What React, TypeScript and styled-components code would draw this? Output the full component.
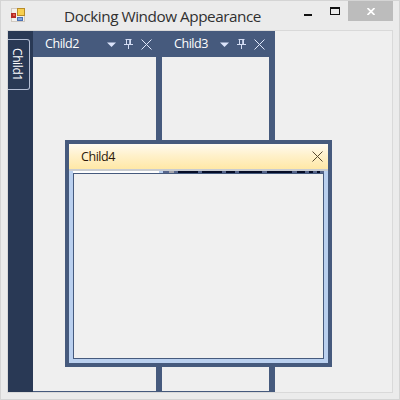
import React from "react";
import styled, { createGlobalStyle } from "styled-components";

const steel = "#465a7d";
const navy = "#293955";

const GlobalStyle = createGlobalStyle`
  * { box-sizing: border-box; }
  body { margin: 0; overflow: hidden; }
`;

const Frame = styled.div`
  position: relative;
  width: 400px;
  height: 400px;
  padding: 1px 6px 6px;
  display: flex;
  flex-direction: column;
  background: #ebebeb;
  border: 1px solid #d4d4d4;
  font-family: "Open Sans", "Noto Sans", sans-serif;
`;

const TitleBar = styled.header`
  display: flex;
  align-items: flex-start;
  height: 28px;
  padding-left: 4px;
`;

const AppIcon = styled.svg`
  flex: none;
  margin-top: 6px;
`;

const WindowTitle = styled.h1`
  flex: none;
  width: 220px;
  margin: 4px 0 0 39px;
  font-size: 15.3px;
  line-height: 21px;
  font-weight: 400;
  letter-spacing: -0.46px;
  color: #303030;
  white-space: nowrap;
`;

const Caption = styled.div`
  display: flex;
  margin-left: auto;
`;

const CaptionButton = styled.button<{ $close?: boolean }>`
  width: ${(p) => (p.$close ? 45 : 27)}px;
  height: 20px;
  margin-top: -1px;
  padding: 0;
  border: 0;
  display: flex;
  align-items: center;
  justify-content: center;
  background: ${(p) => (p.$close ? "#bcbcbc" : "transparent")};
`;

const Client = styled.main`
  flex: 1;
  display: flex;
  background: #efefef;
  border: 1px solid #d9d9d9;
`;

const AutoHideStrip = styled.aside`
  width: 25px;
  background: ${navy};
  padding-top: 8px;
`;

const AutoHideTab = styled.div`
  width: 22px;
  height: 51px;
  border: 1px solid #b5bfd5;
  border-left: 0;
  border-radius: 0 3px 3px 0;
  display: flex;
  align-items: center;
  justify-content: center;
  padding-right: 4px;
  writing-mode: vertical-rl;
  color: #fff;
  font-size: 12px;
  line-height: 16px;
  letter-spacing: -0.4px;
`;

const DockPanel = styled.section<{ $width: number; $edge: number }>`
  width: ${(p) => p.$width}px;
  display: flex;
  flex-direction: column;
  border-right: ${(p) => p.$edge}px solid ${steel};
  border-bottom: 1px solid ${steel};
`;

const DockHeader = styled.div<{ $edge: number }>`
  height: 26px;
  margin-right: -${(p) => p.$edge}px;
  padding: 0 10px 0 12px;
  display: flex;
  align-items: center;
  background: ${steel};
  color: #fff;
`;

const PanelTitle = styled.span`
  font-size: 12.5px;
  line-height: 16px;
  letter-spacing: -0.45px;
`;

const Tools = styled.div`
  display: flex;
  align-items: center;
  margin-left: auto;
`;

const FloatingWindow = styled.section`
  position: absolute;
  left: 64px;
  top: 139px;
  width: 267px;
  height: 227px;
  border: 4px solid ${steel};
  background: #bad0ef;
  display: flex;
  flex-direction: column;
`;

const FloatingHeader = styled.div`
  height: 27px;
  padding: 0 5px 0 12px;
  display: flex;
  align-items: center;
  justify-content: space-between;
  background: linear-gradient(#fffaf0, #fff1cb 45%, #ffe8a6);
  border-bottom: 2px solid #c9ccd0;
  color: #2b1708;
`;

const FloatingBody = styled.div`
  flex: 1;
  margin: 0 4px 4px;
  display: flex;
  flex-direction: column;
`;

const BodySurface = styled.div`
  flex: 1;
  background: #f0f0f0;
  border: 1px solid ${steel};
`;

const Strip = styled.svg`
  display: block;
  flex: none;
`;

function CloseGlyph({ color }: { color: string }) {
  return (
    <svg width="11" height="11" viewBox="0 0 11 11">
      <path d="M.5.5l10 10M10.5.5l-10 10" stroke={color} strokeWidth="1" fill="none" />
    </svg>
  );
}

function PanelTools() {
  return (
    <Tools>
      <svg width="45" height="12" viewBox="0 0 45 12">
        <path d="M0 4.5h9L4.5 9z" fill="#dce4fb" />
        <path d="M18.5 1.5h6M19.5 2v4.5M23.5 2v4.5M22.7 2v4.5M17 6.5h9M21.5 7v4" stroke="#d3dcf3" strokeWidth="1" fill="none" />
        <path d="M34.5 1.5l10 10M44.5 1.5l-10 10" stroke="#dfe7fb" strokeWidth="1" fill="none" />
      </svg>
    </Tools>
  );
}

const panels = [
  { name: "Child2", width: 129, edge: 6 },
  { name: "Child3", width: 113, edge: 6 },
];

const stripMarks = [
  [90, 6], [101, 4], [125, 4], [149, 4], [162, 4], [189, 5], [219, 5], [232, 4], [240, 4], [247, 4],
];

export default function App() {
  return (
    <>
      <GlobalStyle />
      <Frame>
        <TitleBar>
          <AppIcon width="14" height="14" viewBox="0 0 14 14">
            <rect x=".5" y=".5" width="13" height="13" fill="#f3f1ed" stroke="#d0c9c1" />
            <rect x="6" y="0" width="8" height="8" fill="#b98c28" />
            <rect x="7" y="1" width="6" height="6" fill="#f7cf50" />
            <rect x="0" y="5" width="5" height="5" fill="#b52b27" />
            <rect x="2" y="6" width="2" height="2" fill="#e2604f" />
            <rect x="6" y="9" width="6" height="4" fill="#4c72b4" />
            <rect x="7" y="10" width="4" height="2" fill="#83a8df" />
          </AppIcon>
          <WindowTitle>Docking Window Appearance</WindowTitle>
          <Caption>
            <CaptionButton aria-label="Minimize">
              <svg width="10" height="12" viewBox="0 0 10 12"><path d="M1 10h8" stroke="#111" strokeWidth="2" /></svg>
            </CaptionButton>
            <CaptionButton aria-label="Maximize">
              <svg width="10" height="8" viewBox="0 0 10 8"><path d="M0 0h10v8H0zM1 2v5h8V2z" fill="#111" fillRule="evenodd" /></svg>
            </CaptionButton>
            <CaptionButton $close aria-label="Close">
              <svg width="8" height="7" viewBox="0 0 8 7"><path d="M.5 0l7 7M7.5 0l-7 7" stroke="#fff" strokeWidth="1.7" /></svg>
            </CaptionButton>
          </Caption>
        </TitleBar>
        <Client>
          <AutoHideStrip>
            <AutoHideTab>Child1</AutoHideTab>
          </AutoHideStrip>
          {panels.map((p) => (
            <DockPanel key={p.name} $width={p.width} $edge={p.edge}>
              <DockHeader $edge={p.edge}>
                <PanelTitle>{p.name}</PanelTitle>
                <PanelTools />
              </DockHeader>
            </DockPanel>
          ))}
        </Client>
        <FloatingWindow>
          <FloatingHeader>
            <PanelTitle>Child4</PanelTitle>
            <CloseGlyph color="#594a31" />
          </FloatingHeader>
          <FloatingBody>
            <Strip width="251" height="2" viewBox="0 0 251 2">
              <rect width="251" height="2" fill="#050c26" />
              <rect width="86" height="2" fill="#fff" />
              <rect x="86" width="4" height="2" fill="#bad0ef" />
              {stripMarks.map(([x, w]) => (
                <rect key={x} x={x} width={w} height="2" fill="#56658b" />
              ))}
              <rect x="96" width="5" height="2" fill="#a5a5ac" />
            </Strip>
            <BodySurface />
          </FloatingBody>
        </FloatingWindow>
      </Frame>
    </>
  );
}
